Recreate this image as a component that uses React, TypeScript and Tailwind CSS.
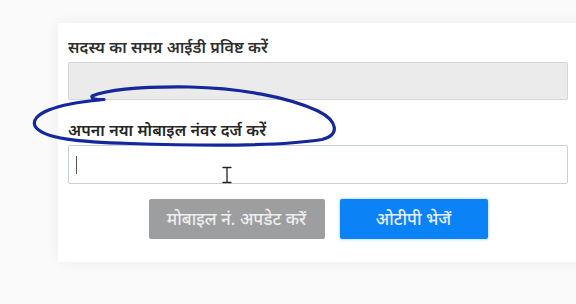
import React from "react";

const font = { fontFamily: '"Noto Sans", "Lato", sans-serif' };

function IBeam() {
  return (
    <svg className="absolute left-[222px] top-[166px]" width="10" height="18" viewBox="0 0 10 18" fill="none">
      <path d="M1 1.5h3.2M5.8 1.5H9M5 2v14M1 16.5h3.2M5.8 16.5H9M4.2 1.5c.4 0 .8.3.8.8M5.8 1.5c-.4 0-.8.3-.8.8M4.2 16.5c.4 0 .8-.3.8-.8M5.8 16.5c-.4 0-.8-.3-.8-.8" stroke="#222" strokeWidth="1.3" strokeLinecap="round" />
    </svg>
  );
}

function Scribble() {
  return (
    <svg className="pointer-events-none absolute left-0 top-0" width="576" height="304" viewBox="0 0 576 304" fill="none">
      <path
        d="M104 99.5 C97 100, 91 99, 92 96 C110 89, 150 86.5, 190 87 C240 88, 288 97, 318 111 C338 121, 340 135, 322 139.5 C282 146, 205 146, 130 143.5 C82 142, 42 139, 35 126 C30 114, 55 104, 100 100"
        stroke="#14289c"
        strokeWidth="3.2"
        strokeLinecap="round"
        strokeLinejoin="round"
      />
    </svg>
  );
}

export default function App() {
  return (
    <div className="relative h-[304px] w-[576px] overflow-hidden bg-[#fafafb] pl-[58px] pt-[23px]" style={font}>
      <div className="h-[239px] w-[540px] bg-white pl-[10px] pt-[12px] shadow-[0_0_14px_rgba(0,0,0,0.06)]">
        <div className="flex h-[24px] items-center text-[16px] font-semibold tracking-[0.1px] text-[#303030]">
          सदस्य का समग्र आईडी प्रविष्ट करें
        </div>
        <div className="mt-[3px] h-[38px] w-[500px] rounded-[2px] border border-[#d7d7d7] bg-[#ebebec]" />
        <div className="mt-[18px] flex h-[24px] items-center text-[16px] font-semibold tracking-[0.1px] text-[#262626]">
          अपना नया मोबाइल नंवर दर्ज करें
        </div>
        <div className="mt-[3px] flex h-[39px] w-[500px] items-center rounded-[2px] border border-[#c9d1d8] bg-white pl-[7px]">
          <div className="h-[18px] w-[1px] bg-[#555]" />
        </div>
        <div className="mt-[15px] flex w-[500px] justify-center gap-[15px]">
          <button className="flex h-[40px] w-[176px] items-center justify-center rounded-[2px] bg-[#9d9ea0] text-[17px] font-medium text-[#eeeeee]">
            मोबाइल नं. अपडेट करें
          </button>
          <button className="flex h-[40px] w-[148px] items-center justify-center rounded-[2px] bg-[#0b82f6] text-[17px] font-medium text-[#e6efff] shadow-[0_0_3px_rgba(11,130,246,0.5)]">
            ओटीपी भेजें
          </button>
        </div>
      </div>
      <IBeam />
      <Scribble />
    </div>
  );
}
